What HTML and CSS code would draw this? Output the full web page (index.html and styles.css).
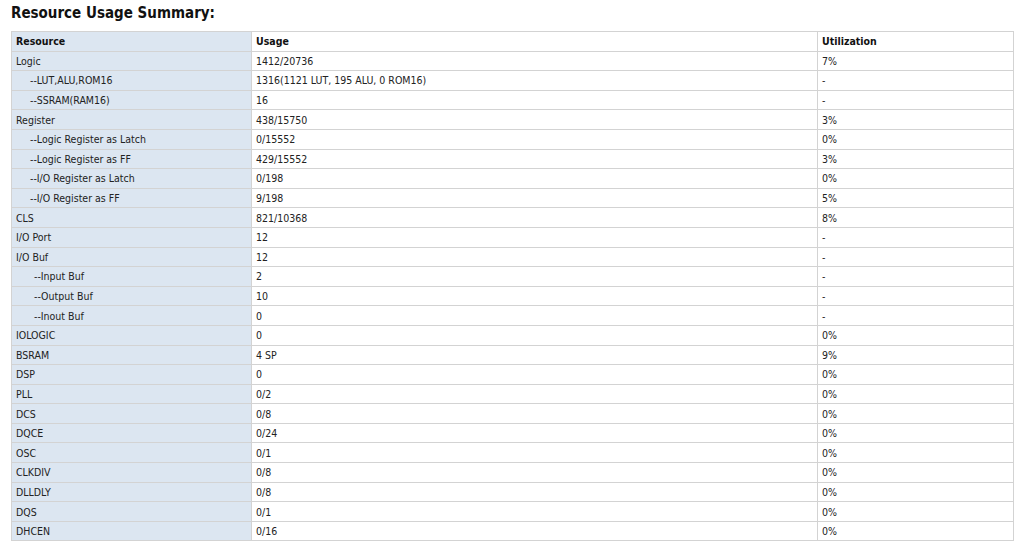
FILE: index.html
```html
<!DOCTYPE html>
<html>
<head>
<meta charset="utf-8">
<link rel="stylesheet" href="styles.css">
</head>
<body>
<h2 class="title">Resource Usage Summary:</h2>
<table class="summary">
<colgroup><col class="c1"><col class="c2"><col class="c3"></colgroup>
<tr><th class="label">Resource</th><th>Usage</th><th>Utilization</th></tr>
<tr><td class="label">Logic</td><td>1412/20736</td><td>7%</td></tr>
<tr><td class="label i1">--LUT,ALU,ROM16</td><td>1316(1121 LUT, 195 ALU, 0 ROM16)</td><td>-</td></tr>
<tr><td class="label i1">--SSRAM(RAM16)</td><td>16</td><td>-</td></tr>
<tr><td class="label">Register</td><td>438/15750</td><td>3%</td></tr>
<tr><td class="label i1">--Logic Register as Latch</td><td>0/15552</td><td>0%</td></tr>
<tr><td class="label i1">--Logic Register as FF</td><td>429/15552</td><td>3%</td></tr>
<tr><td class="label i1">--I/O Register as Latch</td><td>0/198</td><td>0%</td></tr>
<tr><td class="label i1">--I/O Register as FF</td><td>9/198</td><td>5%</td></tr>
<tr><td class="label">CLS</td><td>821/10368</td><td>8%</td></tr>
<tr><td class="label">I/O Port</td><td>12</td><td>-</td></tr>
<tr><td class="label">I/O Buf</td><td>12</td><td>-</td></tr>
<tr><td class="label i2">--Input Buf</td><td>2</td><td>-</td></tr>
<tr><td class="label i2">--Output Buf</td><td>10</td><td>-</td></tr>
<tr><td class="label i2">--Inout Buf</td><td>0</td><td>-</td></tr>
<tr><td class="label">IOLOGIC</td><td>0</td><td>0%</td></tr>
<tr><td class="label">BSRAM</td><td>4 SP</td><td>9%</td></tr>
<tr><td class="label">DSP</td><td>0</td><td>0%</td></tr>
<tr><td class="label">PLL</td><td>0/2</td><td>0%</td></tr>
<tr><td class="label">DCS</td><td>0/8</td><td>0%</td></tr>
<tr><td class="label">DQCE</td><td>0/24</td><td>0%</td></tr>
<tr><td class="label">OSC</td><td>0/1</td><td>0%</td></tr>
<tr><td class="label">CLKDIV</td><td>0/8</td><td>0%</td></tr>
<tr><td class="label">DLLDLY</td><td>0/8</td><td>0%</td></tr>
<tr><td class="label">DQS</td><td>0/1</td><td>0%</td></tr>
<tr><td class="label">DHCEN</td><td>0/16</td><td>0%</td></tr>
</table>
</body>
</html>
```
FILE: styles.css
```css
html, body {
  margin: 0;
  padding: 0;
  background: #ffffff;
}
body {
  padding: 0 11px;
  font-family: "DejaVu Sans Condensed", "DejaVu Sans", Verdana, sans-serif;
  color: #222222;
}
.title {
  margin: 0;
  padding-top: 4px;
  height: 31px;
  box-sizing: border-box;
  font-size: 15px;
  font-weight: bold;
  color: #111111;
  line-height: 18px;
}
.summary {
  border-collapse: collapse;
  width: 1002px;
  table-layout: fixed;
  font-size: 10.5px;
}
.c1 { width: 240px; }
.c2 { width: 566px; }
.c3 { width: 196px; }
.summary th, .summary td {
  border: 1px solid #d3d3d3;
  height: 18.6px;
  padding: 0 4px;
  text-align: left;
  white-space: nowrap;
  line-height: 14px;
}
.summary th {
  font-weight: bold;
  color: #111111;
}
.label {
  background: #dce6f1;
}
.i1 { padding-left: 18px !important; }
.i2 { padding-left: 22px !important; }
```
